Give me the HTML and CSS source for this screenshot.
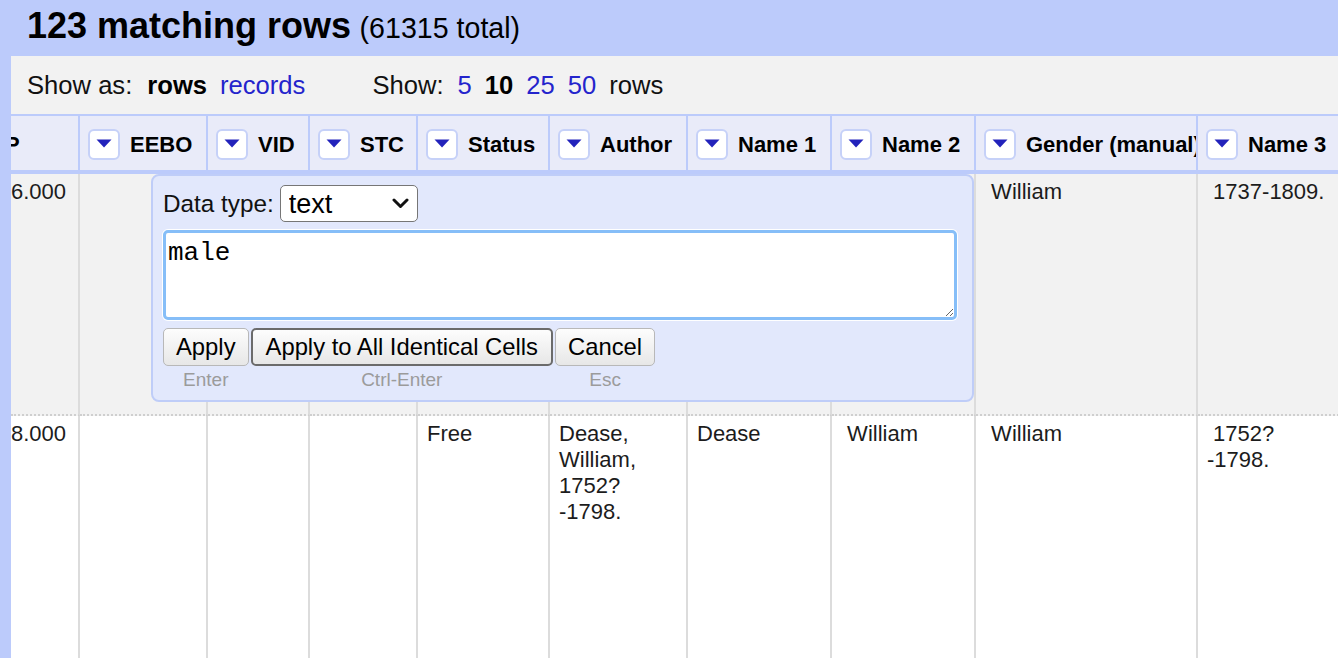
FILE: index.html
```html
<!DOCTYPE html>
<html>
<head>
<meta charset="utf-8">
<title>Rows</title>
<link rel="stylesheet" href="styles.css">
</head>
<body>
<div class="topbar">
  <span class="count">123 matching rows</span>
  <span class="total">(61315 total)</span>
</div>
<div class="main">
  <div class="rail"></div>
  <div class="content">
    <div class="toolbar">
      <span>Show as:</span>
      <b class="cur first-cur">rows</b>
      <a class="lnk">records</a>
      <span class="show">Show:</span>
      <a class="lnk">5</a>
      <b class="cur">10</b>
      <a class="lnk">25</a>
      <a class="lnk">50</a>
      <span>rows</span>
    </div>
    <div class="grid-wrap">
      <table class="grid">
        <colgroup>
          <col class="w0"><col class="w1"><col class="w2"><col class="w3"><col class="w4">
          <col class="w5"><col class="w6"><col class="w7"><col class="w8"><col class="w9">
        </colgroup>
        <thead>
          <tr>
            <th><div class="hcell"><span class="cut">P</span></div></th>
            <th><div class="hcell"><span class="dd"><svg width="16" height="9" viewBox="0 0 16 9"><path d="M0.5 0.5 H15.5 L8 8.5 Z" fill="#2222bb"/></svg></span><span class="lbl">EEBO</span></div></th>
            <th><div class="hcell"><span class="dd"><svg width="16" height="9" viewBox="0 0 16 9"><path d="M0.5 0.5 H15.5 L8 8.5 Z" fill="#2222bb"/></svg></span><span class="lbl">VID</span></div></th>
            <th><div class="hcell"><span class="dd"><svg width="16" height="9" viewBox="0 0 16 9"><path d="M0.5 0.5 H15.5 L8 8.5 Z" fill="#2222bb"/></svg></span><span class="lbl">STC</span></div></th>
            <th><div class="hcell"><span class="dd"><svg width="16" height="9" viewBox="0 0 16 9"><path d="M0.5 0.5 H15.5 L8 8.5 Z" fill="#2222bb"/></svg></span><span class="lbl">Status</span></div></th>
            <th><div class="hcell"><span class="dd"><svg width="16" height="9" viewBox="0 0 16 9"><path d="M0.5 0.5 H15.5 L8 8.5 Z" fill="#2222bb"/></svg></span><span class="lbl">Author</span></div></th>
            <th><div class="hcell"><span class="dd"><svg width="16" height="9" viewBox="0 0 16 9"><path d="M0.5 0.5 H15.5 L8 8.5 Z" fill="#2222bb"/></svg></span><span class="lbl">Name 1</span></div></th>
            <th><div class="hcell"><span class="dd"><svg width="16" height="9" viewBox="0 0 16 9"><path d="M0.5 0.5 H15.5 L8 8.5 Z" fill="#2222bb"/></svg></span><span class="lbl">Name 2</span></div></th>
            <th><div class="hcell"><span class="dd"><svg width="16" height="9" viewBox="0 0 16 9"><path d="M0.5 0.5 H15.5 L8 8.5 Z" fill="#2222bb"/></svg></span><span class="lbl">Gender (manual)</span></div></th>
            <th><div class="hcell"><span class="dd"><svg width="16" height="9" viewBox="0 0 16 9"><path d="M0.5 0.5 H15.5 L8 8.5 Z" fill="#2222bb"/></svg></span><span class="lbl">Name 3</span></div></th>
          </tr>
        </thead>
        <tbody>
          <tr class="r1">
            <td class="first">6.000</td>
            <td></td><td></td><td></td><td></td><td></td><td></td><td></td>
            <td>&nbsp;William</td>
            <td>&nbsp;1737-1809.</td>
          </tr>
          <tr class="r2">
            <td class="first">8.000</td>
            <td></td><td></td><td></td>
            <td>Free</td>
            <td>Dease,<br>William,<br>1752?<br>-1798.</td>
            <td>Dease</td>
            <td>&nbsp;William</td>
            <td>&nbsp;William</td>
            <td>&nbsp;1752?<br>-1798.</td>
          </tr>
        </tbody>
      </table>

      <div class="editor">
        <div class="dtype">
          <span class="dlabel">Data type:</span>
          <div class="selwrap">
            <select class="sel">
              <option>text</option>
              <option>number</option>
              <option>boolean</option>
              <option>date</option>
            </select>
            <svg class="chev" width="17" height="11" viewBox="0 0 17 11"><path d="M2 2 L8.5 8.5 L15 2" fill="none" stroke="#111" stroke-width="3" stroke-linecap="round" stroke-linejoin="round"/></svg>
          </div>
        </div>
        <textarea class="val">male</textarea>
        <div class="actions">
          <div class="act"><button class="btn">Apply</button><span class="hint">Enter</span></div>
          <div class="act"><button class="btn primary">Apply to All Identical Cells</button><span class="hint">Ctrl-Enter</span></div>
          <div class="act"><button class="btn">Cancel</button><span class="hint">Esc</span></div>
        </div>
      </div>
    </div>
  </div>
</div>
</body>
</html>
```

FILE: styles.css
```css
html, body {
  margin: 0;
  padding: 0;
  height: 100%;
  overflow: hidden;
}

body {
  display: flex;
  flex-direction: column;
  font-family: "Liberation Sans", Arial, sans-serif;
  color: #111;
  background: #fff;
}

.topbar {
  flex: 0 0 auto;
  height: 56px;
  box-sizing: border-box;
  background: #bccbfb;
  padding: 8px 0 0 27px;
  line-height: 1;
  white-space: nowrap;
}

.count {
  font-size: 36px;
  font-weight: bold;
  color: #000;
}

.total {
  font-size: 28.6px;
  margin-left: 4px;
  color: #000;
}

.main {
  flex: 1 1 auto;
  min-height: 0;
  display: flex;
}

.rail {
  flex: 0 0 11px;
  background: #bccbfb;
}

.content {
  flex: 1 1 auto;
  min-width: 0;
  display: flex;
  flex-direction: column;
}

.toolbar {
  flex: 0 0 58px;
  background: #f2f2f2;
  display: flex;
  align-items: center;
  gap: 13px;
  padding-left: 16px;
  font-size: 25.6px;
  white-space: nowrap;
}

.toolbar .cur {
  color: #000;
}

.toolbar .first-cur {
  margin-left: 2px;
}

.toolbar .lnk {
  color: #2424cc;
  text-decoration: none;
}

.toolbar .show {
  margin-left: 54px;
  margin-right: 1px;
}

.grid-wrap {
  flex: 1 1 auto;
  position: relative;
  overflow: hidden;
}

.grid {
  table-layout: fixed;
  border-collapse: separate;
  border-spacing: 0;
  width: 1387px;
}

.w0 { width: 69px; }
.w1 { width: 128px; }
.w2 { width: 102px; }
.w3 { width: 108px; }
.w4 { width: 132px; }
.w5 { width: 138px; }
.w6 { width: 144px; }
.w7 { width: 144px; }
.w8 { width: 222px; }
.w9 { width: 200px; }

.grid th {
  padding: 0;
  background: #e9ebf9;
  border-top: 2px solid #bccbfb;
  border-bottom: 4px solid #bccbfb;
  border-right: 2px solid #bccbfb;
  text-align: left;
  overflow: hidden;
}

.hcell {
  height: 54px;
  box-sizing: border-box;
  padding-top: 3px;
  display: flex;
  align-items: center;
  gap: 10px;
  padding-left: 8px;
  white-space: nowrap;
  overflow: hidden;
  font-size: 22px;
  font-weight: bold;
  color: #000;
}

.cut {
  margin-left: -14px;
}

.dd {
  flex: 0 0 auto;
  width: 32px;
  height: 31px;
  box-sizing: border-box;
  background: #fff;
  border: 2px solid #c6d1f8;
  border-radius: 6px;
  display: flex;
  justify-content: center;
  align-items: center;
  padding-bottom: 3px;
}

.grid td {
  vertical-align: top;
  padding: 5px 6px 0 9px;
  font-size: 22px;
  line-height: 26px;
  color: #1c1c1c;
  border-right: 2px solid #dcdcdc;
  overflow: hidden;
}

.grid td.first {
  padding-left: 0;
}

.r1 td {
  background: #f2f2f2;
  height: 242px;
  box-sizing: border-box;
  border-bottom: 2px dotted #cfcfcf;
}

.r2 td {
  background: #fff;
  height: 300px;
  box-sizing: border-box;
}

.editor {
  position: absolute;
  left: 140px;
  top: 60px;
  width: 823px;
  box-sizing: border-box;
  background: #e2e8fc;
  border: 2px solid #bfcdf8;
  border-radius: 8px;
  padding: 9px 14px 9px 10px;
}

.dtype {
  display: flex;
  align-items: center;
  gap: 6px;
}

.dlabel {
  font-size: 24.3px;
  color: #111;
}

.selwrap {
  position: relative;
  width: 138px;
  height: 37px;
}

.sel {
  appearance: none;
  -webkit-appearance: none;
  width: 138px;
  height: 37px;
  box-sizing: border-box;
  border: 1px solid #767676;
  border-radius: 5px;
  background: #fff;
  padding: 0 0 0 8px;
  font-family: "Liberation Sans", Arial, sans-serif;
  font-size: 27px;
  color: #000;
}

.chev {
  position: absolute;
  right: 9px;
  top: 13px;
  pointer-events: none;
}

.val {
  display: block;
  margin-top: 8px;
  width: 794px;
  height: 90px;
  box-sizing: border-box;
  border: 3px solid #86bef8;
  border-radius: 5px;
  box-shadow: 0 0 0 1px #ffffff;
  outline: none;
  padding: 5px 2px 2px;
  font-family: "Liberation Mono", "Courier New", monospace;
  font-size: 26px;
  color: #000;
  background: #fff;
}

.actions {
  display: flex;
  gap: 2px;
  margin-top: 8px;
}

.act {
  display: flex;
  flex-direction: column;
  align-items: center;
}

.btn {
  height: 38px;
  box-sizing: border-box;
  padding: 0 12px;
  border: 1px solid #b8b8b8;
  border-radius: 5px;
  background: linear-gradient(#fdfdfd, #e7e7e7);
  font-family: "Liberation Sans", Arial, sans-serif;
  font-size: 23.8px;
  color: #000;
  white-space: nowrap;
}

.btn.primary {
  padding: 0 13px;
  border: 2px solid #6b6b6b;
}

.hint {
  font-size: 19px;
  line-height: 22px;
  padding-top: 3px;
  color: #9b9b9b;
}
```
